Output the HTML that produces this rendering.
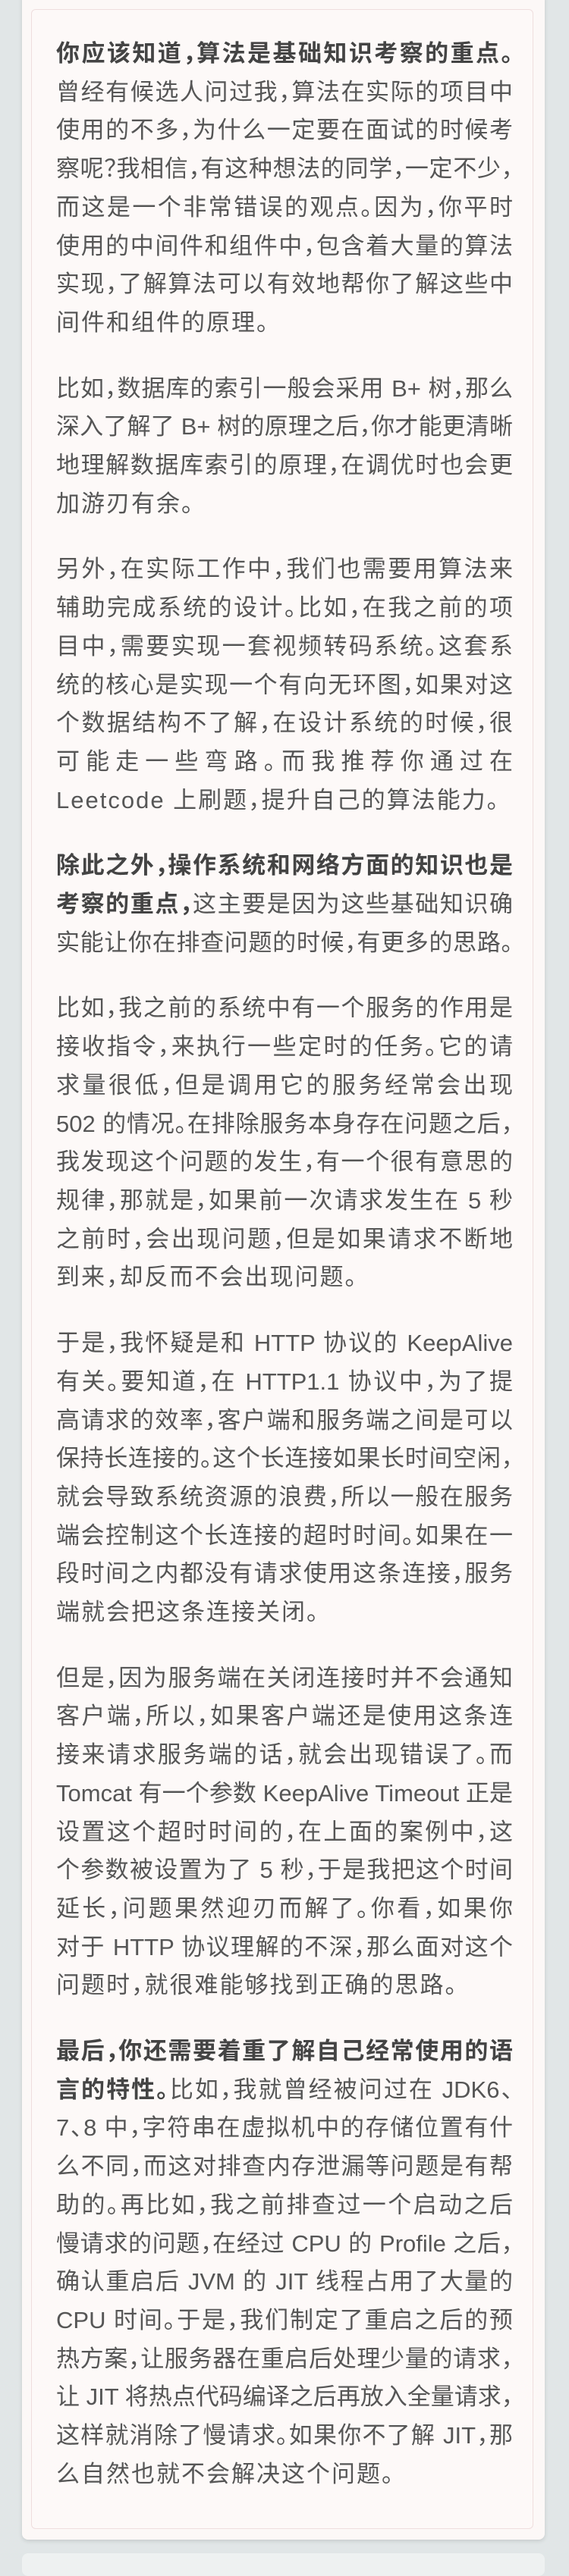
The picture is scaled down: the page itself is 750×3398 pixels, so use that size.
<!DOCTYPE html>
<html><head><meta charset="utf-8"><style>
html,body{margin:0;padding:0;}
body{width:750px;height:3378px;background:#e1e6e7;position:relative;overflow:hidden;font-family:"Liberation Sans","Noto Sans CJK SC",sans-serif;}
.outer{position:absolute;left:29px;top:-10px;width:689px;height:3360px;background:#fcf8f7;border-radius:8px;box-shadow:0 2px 6px rgba(0,0,0,0.12);}
.inner{position:absolute;left:12px;top:22px;width:662px;height:3324px;box-sizing:border-box;border:1px solid #efdede;border-radius:6px;background:#fdf9f8;padding:33px 0 0 32px;}
.next{position:absolute;left:29px;top:3368px;width:689px;height:30px;background:#eef1f1;border-radius:8px;}
p{margin:0 0 36px 0;width:602px;font-size:31px;line-height:50.7px;letter-spacing:0;color:#565656;font-feature-settings:"halt" 1;}
p span.l{display:block;text-align:justify;text-align-last:justify;white-space:nowrap;text-justify:inter-character;}
p span.e{display:block;text-align:left;text-align-last:left;white-space:nowrap;letter-spacing:2px;}
b{color:#444;font-weight:bold;}
</style></head><body>
<div class="outer"><div class="inner">
<p><span class="l"><b>你应该知道，算法是基础知识考察的重点。</b></span><span class="l">曾经有候选人问过我，算法在实际的项目中</span><span class="l">使用的不多，为什么一定要在面试的时候考</span><span class="l">察呢？我相信，有这种想法的同学，一定不少，</span><span class="l">而这是一个非常错误的观点。因为，你平时</span><span class="l">使用的中间件和组件中，包含着大量的算法</span><span class="l">实现，了解算法可以有效地帮你了解这些中</span><span class="e">间件和组件的原理。</span></p>
<p><span class="l">比如，数据库的索引一般会采用 B+ 树，那么</span><span class="l">深入了解了 B+ 树的原理之后，你才能更清晰</span><span class="l">地理解数据库索引的原理，在调优时也会更</span><span class="e">加游刃有余。</span></p>
<p><span class="l">另外，在实际工作中，我们也需要用算法来</span><span class="l">辅助完成系统的设计。比如，在我之前的项</span><span class="l">目中，需要实现一套视频转码系统。这套系</span><span class="l">统的核心是实现一个有向无环图，如果对这</span><span class="l">个数据结构不了解，在设计系统的时候，很</span><span class="l">可能走一些弯路。而我推荐你通过在</span><span class="e">Leetcode 上刷题，提升自己的算法能力。</span></p>
<p><span class="l"><b>除此之外，操作系统和网络方面的知识也是</b></span><span class="l"><b>考察的重点，</b>这主要是因为这些基础知识确</span><span class="l">实能让你在排查问题的时候，有更多的思路。</span></p>
<p><span class="l">比如，我之前的系统中有一个服务的作用是</span><span class="l">接收指令，来执行一些定时的任务。它的请</span><span class="l">求量很低，但是调用它的服务经常会出现</span><span class="l">502 的情况。在排除服务本身存在问题之后，</span><span class="l">我发现这个问题的发生，有一个很有意思的</span><span class="l">规律，那就是，如果前一次请求发生在 5 秒</span><span class="l">之前时，会出现问题，但是如果请求不断地</span><span class="e">到来，却反而不会出现问题。</span></p>
<p><span class="l">于是，我怀疑是和 HTTP 协议的 KeepAlive</span><span class="l">有关。要知道，在 HTTP1.1 协议中，为了提</span><span class="l">高请求的效率，客户端和服务端之间是可以</span><span class="l">保持长连接的。这个长连接如果长时间空闲，</span><span class="l">就会导致系统资源的浪费，所以一般在服务</span><span class="l">端会控制这个长连接的超时时间。如果在一</span><span class="l">段时间之内都没有请求使用这条连接，服务</span><span class="e">端就会把这条连接关闭。</span></p>
<p><span class="l">但是，因为服务端在关闭连接时并不会通知</span><span class="l">客户端，所以，如果客户端还是使用这条连</span><span class="l">接来请求服务端的话，就会出现错误了。而</span><span class="l">Tomcat 有一个参数 KeepAlive Timeout 正是</span><span class="l">设置这个超时时间的，在上面的案例中，这</span><span class="l">个参数被设置为了 5 秒，于是我把这个时间</span><span class="l">延长，问题果然迎刃而解了。你看，如果你</span><span class="l">对于 HTTP 协议理解的不深，那么面对这个</span><span class="e">问题时，就很难能够找到正确的思路。</span></p>
<p><span class="l"><b>最后，你还需要着重了解自己经常使用的语</b></span><span class="l"><b>言的特性。</b>比如，我就曾经被问过在 JDK6、</span><span class="l">7、8 中，字符串在虚拟机中的存储位置有什</span><span class="l">么不同，而这对排查内存泄漏等问题是有帮</span><span class="l">助的。再比如，我之前排查过一个启动之后</span><span class="l">慢请求的问题，在经过 CPU 的 Profile 之后，</span><span class="l">确认重启后 JVM 的 JIT 线程占用了大量的</span><span class="l">CPU 时间。于是，我们制定了重启之后的预</span><span class="l">热方案，让服务器在重启后处理少量的请求，</span><span class="l">让 JIT 将热点代码编译之后再放入全量请求，</span><span class="l">这样就消除了慢请求。如果你不了解 JIT，那</span><span class="e">么自然也就不会解决这个问题。</span></p>
</div></div>
<div class="next"></div>
</body></html>
